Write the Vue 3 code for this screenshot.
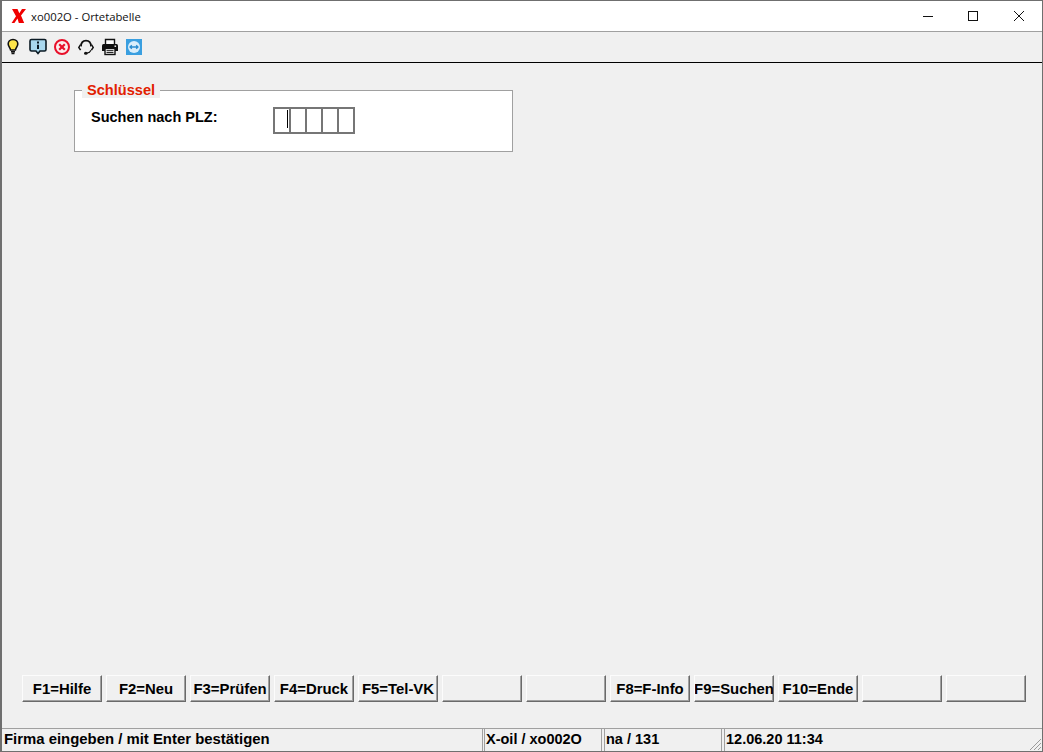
<script setup>
const buttons = ['F1=Hilfe','F2=Neu','F3=Prüfen','F4=Druck','F5=Tel-VK','','','F8=F-Info','F9=Suchen','F10=Ende','','']
const cells = [0,1,2,3,4]
</script>

<template>
  <div class="window">
    <header class="titlebar">
      <svg class="logo" width="16" height="16" viewBox="0 0 16 16">
        <path d="M1 1H6.5L8.3 5.2L11 1H15L10 7.6L13.2 15H7.8L6.5 10.6L3.4 15H0.6L5 8.2Z" fill="#f00000"/>
      </svg>
      <span class="title">xo002O - Ortetabelle</span>
      <div class="controls">
        <svg width="46" height="30" viewBox="0 0 46 30"><path d="M19 15.5H29" stroke="#111" fill="none"/></svg>
        <svg width="46" height="30" viewBox="0 0 46 30"><rect x="18.5" y="10.5" width="9" height="9" stroke="#111" fill="none"/></svg>
        <svg width="46" height="30" viewBox="0 0 46 30"><path d="M18 10L28 20M28 10L18 20" stroke="#111" fill="none"/></svg>
      </div>
    </header>
    <nav class="toolbar">
      <span class="slot"><svg width="16" height="18" viewBox="1 0 16 18">
        <path d="M8 1.5C5 1.5 3.2 3.6 3.2 6C3.2 8.4 5.2 9.4 5.6 12H10.4C10.8 9.4 12.8 8.4 12.8 6C12.8 3.6 11 1.5 8 1.5Z" fill="#ffe54a" stroke="#111" stroke-width="1.6"/>
        <path d="M6 13.7H10M6.5 15.5H9.5" stroke="#111" stroke-width="1.4"/>
      </svg></span>
      <span class="slot"><svg width="18" height="18" viewBox="0 0 18 18">
        <path d="M2.5 1.5H15.5Q17 1.5 17 3V11.5Q17 13 15.5 13H11L9 15.5L7 13H2.5Q1 13 1 11.5V3Q1 1.5 2.5 1.5Z" fill="#a9d8ef" stroke="#0b1a24" stroke-width="1.6"/>
        <path d="M9 3.6V5.4M9 6.8V11" stroke="#0b1a24" stroke-width="2"/>
      </svg></span>
      <span class="slot"><svg width="18" height="18" viewBox="0 0 18 18">
        <circle cx="9" cy="9" r="7" fill="#fbeeee" stroke="#e8102a" stroke-width="2"/>
        <path d="M6.2 6.2L11.8 11.8M11.8 6.2L6.2 11.8" stroke="#e8102a" stroke-width="2.2"/>
      </svg></span>
      <span class="slot"><svg width="18" height="18" viewBox="0 0 18 18">
        <path d="M4 8.5C4 4.8 6 2.6 9 2.6C12 2.6 14 4.8 14 8.5" fill="none" stroke="#111" stroke-width="1.7"/>
        <path d="M3.6 6.6L1.8 9.4L3.6 12.2M14.4 6.6L16.2 9.4L14.4 12.2" fill="#fff" stroke="#111" stroke-width="1.5"/>
        <path d="M14 12.2C13.2 14 11.8 14.8 10 15" fill="none" stroke="#111" stroke-width="1.2"/>
        <ellipse cx="8.8" cy="15.2" rx="1.8" ry="1.5" fill="#111"/>
      </svg></span>
      <span class="slot"><svg width="18" height="18" viewBox="0 0 18 18">
        <path d="M4.5 6V1.5H13.5V6" fill="#fff" stroke="#111" stroke-width="1.4"/>
        <path d="M2.5 6H15.5Q17 6 17 7.5V13H1V7.5Q1 6 2.5 6Z" fill="#111"/>
        <rect x="4" y="10.5" width="10" height="6" fill="#fff" stroke="#111" stroke-width="1.4"/>
        <path d="M5.5 12.7H12.5M5.5 14.6H12.5" stroke="#111"/>
        <rect x="13.5" y="7.5" width="1.6" height="1.4" fill="#fff"/>
      </svg></span>
      <span class="slot"><svg width="16" height="16" viewBox="0 0 16 16">
        <rect width="16" height="16" fill="#3a9fe0"/>
        <circle cx="8" cy="8" r="6" fill="#d9eefb"/>
        <path d="M4 8H12M5.8 6.2L4 8L5.8 9.8M10.2 6.2L12 8L10.2 9.8" fill="none" stroke="#2a8cd0" stroke-width="1.3"/>
      </svg></span>
    </nav>
    <main class="content">
      <fieldset class="group">
        <legend>Schlüssel</legend>
        <div class="row">
          <label>Suchen nach PLZ:</label>
          <div class="cells">
            <div v-for="c in cells" :key="c" class="cell"><i v-if="c === 0" class="caret"></i></div>
          </div>
        </div>
      </fieldset>
      <div class="buttons">
        <button v-for="(b, i) in buttons" :key="i" class="fkey" type="button"><span>{{ b }}</span></button>
      </div>
    </main>
    <footer class="status">
      <div class="pane p1">Firma eingeben / mit Enter bestätigen</div>
      <div class="pane p2">X-oil / xo002O</div>
      <div class="pane p3">na / 131</div>
      <div class="pane p4">12.06.20 11:34</div>
      <svg class="grip" width="14" height="14" viewBox="0 0 14 14">
        <path d="M13 2L2 13M13 6L6 13M13 10L10 13" stroke="#9a9a9a" fill="none"/>
      </svg>
    </footer>
  </div>
</template>

<style scoped>
.window {
  box-sizing: border-box;
  width: 1043px;
  height: 752px;
  display: flex;
  flex-direction: column;
  background: #f0f0f0;
  border: 1px solid #6f6f6f;
  border-left-width: 2px;
  font-family: "Liberation Sans", Arial, sans-serif;
  color: #000;
  overflow: hidden;
}
.titlebar {
  box-sizing: border-box;
  height: 31px;
  flex: none;
  display: flex;
  align-items: center;
  background: #fff;
  border-bottom: 1px solid #a0a0a0;
  padding-left: 9px;
}
.logo { flex: none; margin-top: -1px; }
.title {
  margin-left: 4px;
  font: 11.3px "Open Sans", "Noto Sans", sans-serif;
  color: #111;
}
.controls { margin-left: auto; display: flex; }
.controls svg { display: block; }
.toolbar {
  box-sizing: border-box;
  height: 31px;
  flex: none;
  display: flex;
  align-items: center;
  padding-bottom: 1px;
  border-bottom: 1px solid #000;
}
.slot {
  flex: none;
  width: 24px;
  display: flex;
  justify-content: center;
}
.slot svg { display: block; }
.content {
  flex: 1;
  display: flex;
  flex-direction: column;
  min-height: 0;
  padding: 20px 0 0 20px;
}
.group {
  box-sizing: border-box;
  width: 439px;
  height: 70px;
  margin: -1px 0 0 52px;
  padding: 0 0 0 16px;
  background: #fff;
  border: 1px solid #a0a0a0;
  min-inline-size: 0;
}
.group legend {
  margin-left: -9px;
  padding: 0 5px;
  background: #f0f0f0;
  color: #e22000;
  font-size: 14.6px;
  font-weight: bold;
  line-height: 16px;
}
.row { display: flex; align-items: flex-start; padding-top: 9px; }
.row label {
  width: 182px;
  margin-top: 2px;
  font-size: 14.5px;
  font-weight: bold;
  line-height: 16px;
}
.cells {
  display: flex;
  box-sizing: border-box;
  height: 27px;
  border-top: 2px solid #767676;
  border-bottom: 2px solid #767676;
}
.cell {
  position: relative;
  box-sizing: border-box;
  width: 16px;
  border-left: 2px solid #767676;
}
.cell:last-child { width: 18px; border-right: 2px solid #767676; }
.caret {
  position: absolute;
  left: 12px;
  top: 1px;
  width: 1px;
  height: 18px;
  background: #000;
}
.buttons {
  display: flex;
  gap: 4px;
  margin-top: auto;
  margin-bottom: 26px;
}
.fkey {
  box-sizing: border-box;
  width: 80px;
  height: 27px;
  padding: 0;
  background: #f0f0f0;
  border: 1px solid;
  border-color: #fcfcfc #6a6a6a #6a6a6a #fcfcfc;
  box-shadow: inset -1px -1px 0 #a0a0a0;
  font: bold 14.9px "Liberation Sans", Arial, sans-serif;
  color: #000;
  display: flex;
  align-items: center;
  justify-content: center;
  overflow: hidden;
  white-space: nowrap;
}
.status {
  position: relative;
  box-sizing: border-box;
  height: 23px;
  flex: none;
  display: flex;
  border-top: 1px solid #a0a0a0;
  font-size: 14.5px;
  font-weight: bold;
  line-height: 21px;
}
.pane {
  box-sizing: border-box;
  padding-left: 2px;
  white-space: nowrap;
  border-right: 1px solid #a0a0a0;
}
.p1 { width: 481px; font-size: 14.9px; }
.p2 { width: 118px; margin-left: 1px; padding-left: 1px; border-left: 1px solid #a0a0a0; }
.p3 { width: 118px; margin-left: 2px; padding-left: 1px; border-left: 1px solid #a0a0a0; }
.p4 { flex: 1; margin-left: 2px; padding-left: 1px; border-left: 1px solid #a0a0a0; border-right: 0; }
.grip { position: absolute; right: 0; bottom: 0; }
</style>
